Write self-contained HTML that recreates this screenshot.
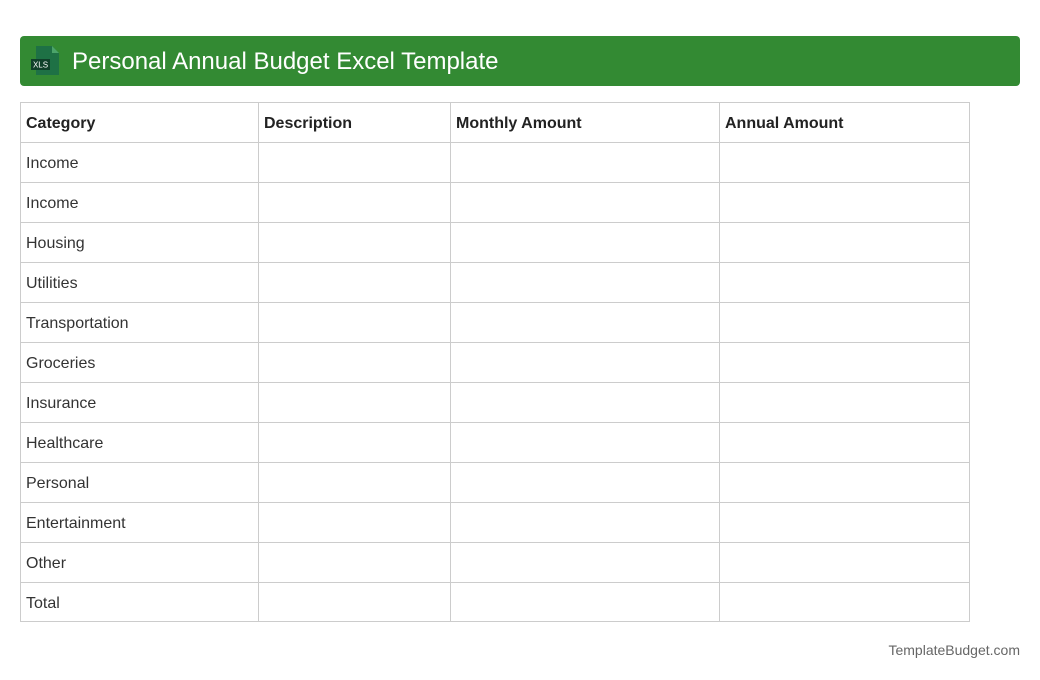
<!DOCTYPE html>
<html><head><meta charset="utf-8"><style>
body{margin:0;width:1040px;height:680px;background:#fff;font-family:"Liberation Sans",sans-serif;position:relative;overflow:hidden}
.hdr{position:absolute;left:20px;top:36px;width:1000px;height:50px;background:#338a33;border-radius:4px}
.hdr svg{position:absolute;left:10px;top:9px}
.hdr h1{position:absolute;left:52px;top:1px;margin:0;line-height:50px;font-size:24px;font-weight:normal;color:#fff}
.tb{position:absolute;left:20px;top:102px;width:950px;height:520px;border:1px solid #ccc;box-sizing:border-box}
.h{position:absolute;left:0;width:948px;height:1px;background:#ccc}
.v{position:absolute;top:0;width:1px;height:518px;background:#ccc}
.r{position:absolute;left:5px;height:40px;line-height:40px;font-size:16px;color:#333;margin-top:2px}
.b{font-weight:bold;color:#222}
.f{position:absolute;right:20px;top:642px;font-size:14px;color:#666}
</style></head><body>
<div class="hdr"><svg width="32" height="32" viewBox="0 0 32 32">
<path d="M6 1h16l7 7v22H6z" fill="#1e7145"/><path d="M22 1v7h7z" fill="#4ba46a"/>
<rect x="1" y="14" width="19" height="11" fill="#10402a"/>
<text x="10.5" y="22.5" font-size="8" fill="#fff" text-anchor="middle" font-family="Liberation Sans">XLS</text></svg>
<h1>Personal Annual Budget Excel Template</h1></div>
<div class="tb">
<div class="v" style="left:237px"></div><div class="v" style="left:429px"></div><div class="v" style="left:698px"></div>
<div class="h" style="top:39px"></div><div class="h" style="top:79px"></div><div class="h" style="top:119px"></div><div class="h" style="top:159px"></div><div class="h" style="top:199px"></div><div class="h" style="top:239px"></div><div class="h" style="top:279px"></div><div class="h" style="top:319px"></div><div class="h" style="top:359px"></div><div class="h" style="top:399px"></div><div class="h" style="top:439px"></div><div class="h" style="top:479px"></div>
<div class="r b" style="top:-1px">Category</div>
<div class="r b" style="top:-1px;left:243px">Description</div>
<div class="r b" style="top:-1px;left:435px">Monthly Amount</div>
<div class="r b" style="top:-1px;left:704px">Annual Amount</div>
<div class="r" style="top:39px">Income</div>
<div class="r" style="top:79px">Income</div>
<div class="r" style="top:119px">Housing</div>
<div class="r" style="top:159px">Utilities</div>
<div class="r" style="top:199px">Transportation</div>
<div class="r" style="top:239px">Groceries</div>
<div class="r" style="top:279px">Insurance</div>
<div class="r" style="top:319px">Healthcare</div>
<div class="r" style="top:359px">Personal</div>
<div class="r" style="top:399px">Entertainment</div>
<div class="r" style="top:439px">Other</div>
<div class="r" style="top:479px">Total</div>
</div>
<div class="f">TemplateBudget.com</div>
</body></html>
